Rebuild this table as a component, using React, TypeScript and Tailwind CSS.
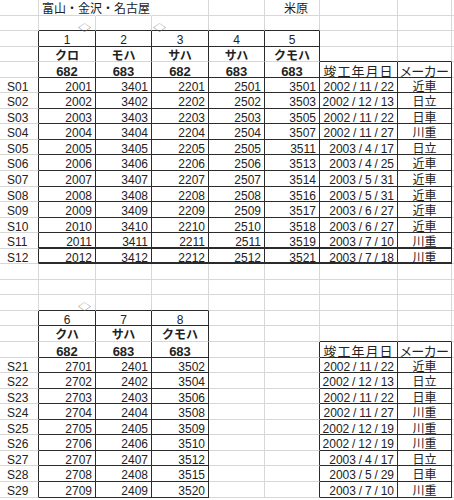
const DARK = true;

// spreadsheet contents, 32 rows x 9 columns
const top: string[][] = [
  ["S01", "2001", "3401", "2201", "2501", "3501", "2002/11/22", "近車"],
  ["S02", "2002", "3402", "2202", "2502", "3503", "2002/12/13", "日立"],
  ["S03", "2003", "3403", "2203", "2503", "3505", "2002/11/22", "日車"],
  ["S04", "2004", "3404", "2204", "2504", "3507", "2002/11/27", "川重"],
  ["S05", "2005", "3405", "2205", "2505", "3511", "2003/4/17", "日立"],
  ["S06", "2006", "3406", "2206", "2506", "3513", "2003/4/25", "近車"],
  ["S07", "2007", "3407", "2207", "2507", "3514", "2003/5/31", "近車"],
  ["S08", "2008", "3408", "2208", "2508", "3516", "2003/5/31", "近車"],
  ["S09", "2009", "3409", "2209", "2509", "3517", "2003/6/27", "近車"],
  ["S10", "2010", "3410", "2210", "2510", "3518", "2003/6/27", "近車"],
  ["S11", "2011", "3411", "2211", "2511", "3519", "2003/7/10", "川重"],
  ["S12", "2012", "3412", "2212", "2512", "3521", "2003/7/18", "川重"],
];

const bottom: string[][] = [
  ["S21", "2701", "2401", "3502", "", "", "2002/11/22", "近車"],
  ["S22", "2702", "2402", "3504", "", "", "2002/12/13", "日立"],
  ["S23", "2703", "2403", "3506", "", "", "2002/11/22", "日車"],
  ["S24", "2704", "2404", "3508", "", "", "2002/11/27", "川重"],
  ["S25", "2705", "2405", "3509", "", "", "2002/12/19", "川重"],
  ["S26", "2706", "2406", "3510", "", "", "2002/12/19", "川重"],
  ["S27", "2707", "2407", "3512", "", "", "2003/4/17", "日立"],
  ["S28", "2708", "2408", "3515", "", "", "2003/5/29", "日車"],
  ["S29", "2709", "2409", "3520", "", "", "2003/7/10", "川重"],
];

const pad = (a: string[]) => [...a, ...Array(9 - a.length).fill("")];

const rows: string[][] = [
  pad(["", "富山・金沢・名古屋", "", "", "", "米原"]),
  pad(["", "◇", "", "◇"]),
  pad(["", "1", "2", "3", "4", "5"]),
  pad(["", "クロ", "モハ", "サハ", "サハ", "クモハ"]),
  pad(["", "682", "683", "682", "683", "683", "竣工年月日", "メーカー"]),
  ...top.map(pad),
  pad([]),
  pad([]),
  pad(["", "◇"]),
  pad(["", "6", "7", "8"]),
  pad(["", "クハ", "サハ", "クモハ"]),
  pad(["", "682", "683", "683", "", "", "竣工年月日", "メーカー"]),
  ...bottom.map(pad),
];

function darkRight(r: number, c: number) {
  if (r >= 2 && r <= 16 && c <= 5) return DARK;
  if (r >= 4 && r <= 16 && (c === 6 || c === 7)) return DARK;
  if (r >= 20 && r <= 31 && c <= 3) return DARK;
  if (r >= 22 && r <= 31 && c >= 5 && c <= 7) return DARK;
  return false;
}

function darkBottom(r: number, c: number) {
  if ((r === 1 || r === 2) && c >= 1 && c <= 5) return true;
  if (r === 3 && (c === 6 || c === 7)) return true;
  if (r >= 4 && r <= 16 && c >= 1 && c <= 7) return true;
  if ((r === 19 || r === 20) && c >= 1 && c <= 3) return true;
  if (r === 21 && (c === 6 || c === 7)) return true;
  if (r >= 22 && r <= 31 && ((c >= 1 && c <= 3) || c === 6 || c === 7)) return true;
  return false;
}

function DateText({ v }: { v: string }) {
  const parts = v.split("/");
  return (
    <span>
      {parts.map((p, i) => (
        <span key={i}>
          {i > 0 && <span className="inline-block w-[9px] text-center">/</span>}
          {p}
        </span>
      ))}
    </span>
  );
}

function Cell({ r, c, text }: { r: number; c: number; text: string }) {
  const dr = darkRight(r, c);
  const db = darkBottom(r, c);
  const thick = (r === 15 || r === 16) && c >= 1 && c <= 7;
  const hideR = r === 0 && (c === 1 || c === 2);
  const rc = dr ? "border-r-[#2b2b2b]" : hideR ? "border-r-white" : "border-r-[#d7d7d7]";
  const bc = db ? "border-b-[#2b2b2b]" : "border-b-[#d7d7d7]";
  const bw = thick ? "border-b-2" : "border-b";
  const base = `border-r ${bw} ${rc} ${bc} flex whitespace-nowrap pt-[2px] leading-[15px] text-[12px]`;

  const header = r <= 4 || (r >= 19 && r <= 22);
  let inner: React.ReactNode = text;
  let cls = "justify-end pr-[3px]";

  if (r === 0) {
    cls = c === 5 ? "justify-start pl-[19px]" : "justify-start pl-[3px]";
  } else if (r === 1 || r === 19) {
    cls = c === 1 ? "justify-end pr-[4px]" : "justify-start pl-[1px]";
    if (text)
      inner = (
        <span className="inline-block mt-[4px] text-[13px] leading-[13px] text-[#777] scale-y-[0.7]">{text}</span>
      );
  } else if (r === 2 || r === 20) {
    cls = "justify-center";
  } else if (r === 3 || r === 21) {
    cls = "justify-center font-bold";
  } else if (header) {
    if (c === 6) cls = "justify-center text-[13px] tracking-[1px]";
    else if (c === 7) cls = "justify-center text-[13px] [font-feature-settings:'palt']";
    else cls = "justify-center font-bold text-[13px]";
  } else if (c === 0) {
    cls = "justify-start pl-[7px]";
  } else if (c === 6) {
    cls = "justify-end pr-[3px]";
    if (text) inner = <DateText v={text} />;
  } else if (c === 7) {
    cls = "justify-center";
  }

  return <div className={`${base} ${cls}`}>{inner}</div>;
}

export default function App() {
  return (
    <div className="w-[454px] h-[500px] overflow-hidden bg-white text-[#222] font-['Liberation_Sans','Noto_Sans_CJK_JP',sans-serif]">
      <div className="grid grid-cols-[39px_57px_56px_57px_56px_55px_78px_54px_1fr] auto-rows-[15.55px]">
        {rows.map((row, r) =>
          row.map((text, c) => <Cell key={`${r}-${c}`} r={r} c={c} text={text} />)
        )}
      </div>
    </div>
  );
}
